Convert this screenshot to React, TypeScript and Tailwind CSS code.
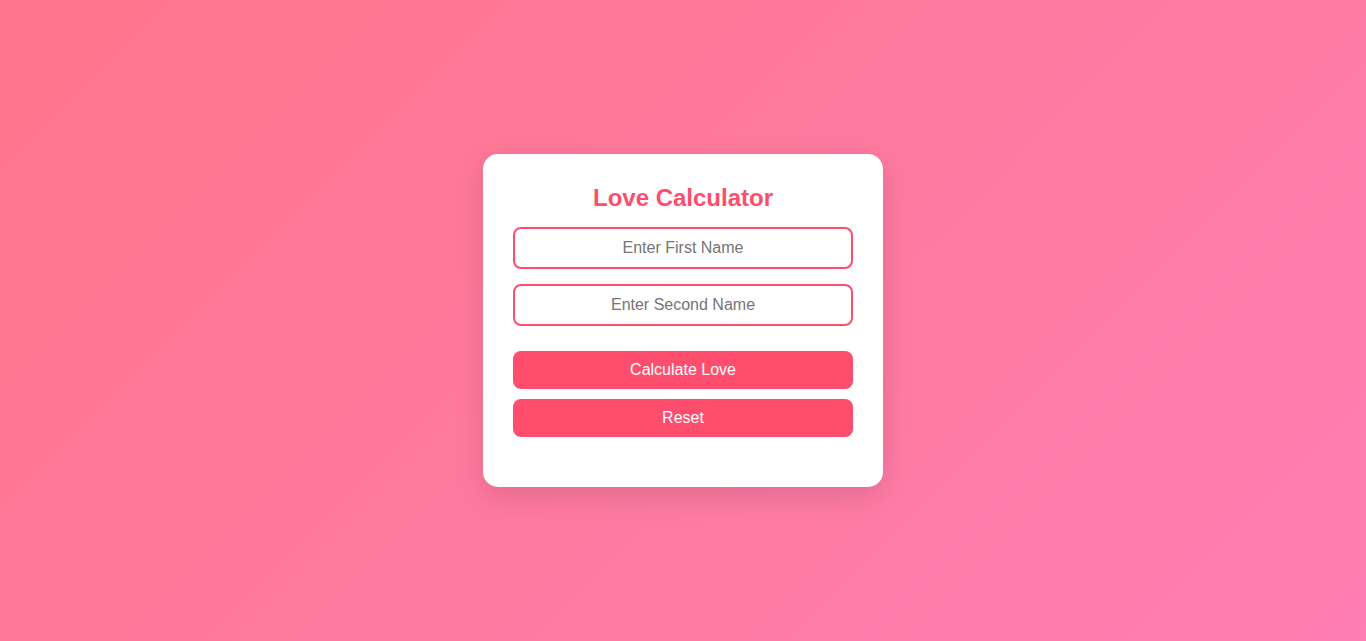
import { useState } from "react";

const App = () => {
  const [first, setFirst] = useState("");
  const [second, setSecond] = useState("");

  return (
    <div
      className="w-full h-screen flex justify-center items-center bg-[linear-gradient(135deg,#ff758c,#ff7eb3)]"
      style={{ fontFamily: '"Liberation Sans", Arial, sans-serif' }}
    >
      {/* Card */}
      <div className="w-[400px] bg-white rounded-[15px] p-[30px] flex flex-col shadow-[0_10px_30px_rgba(0,0,0,0.12)]">
        <h2 className="text-[24px] leading-[28px] font-bold text-[#ff4d6d] text-center mb-[15px]">
          Love Calculator
        </h2>

        <input
          className="h-[42px] w-full border-2 border-[#ff4d6d] rounded-[8px] text-center text-[16px] text-[#333] placeholder:text-[#757575] focus:outline-none mb-[15px]"
          type="text"
          placeholder="Enter First Name"
          value={first}
          onChange={(e) => setFirst(e.target.value)}
        />
        <input
          className="h-[42px] w-full border-2 border-[#ff4d6d] rounded-[8px] text-center text-[16px] text-[#333] placeholder:text-[#757575] focus:outline-none mb-[25px]"
          type="text"
          placeholder="Enter Second Name"
          value={second}
          onChange={(e) => setSecond(e.target.value)}
        />

        <button className="h-[38px] w-full bg-[#ff4d6d] text-white text-[16px] rounded-[8px] mb-[10px]">
          Calculate Love
        </button>
        <button
          className="h-[38px] w-full bg-[#ff4d6d] text-white text-[16px] rounded-[8px]"
          onClick={() => {
            setFirst("");
            setSecond("");
          }}
        >
          Reset
        </button>

        {/* Result */}
        <div className="min-h-[20px]"></div>
      </div>
    </div>
  );
};

export default App;
